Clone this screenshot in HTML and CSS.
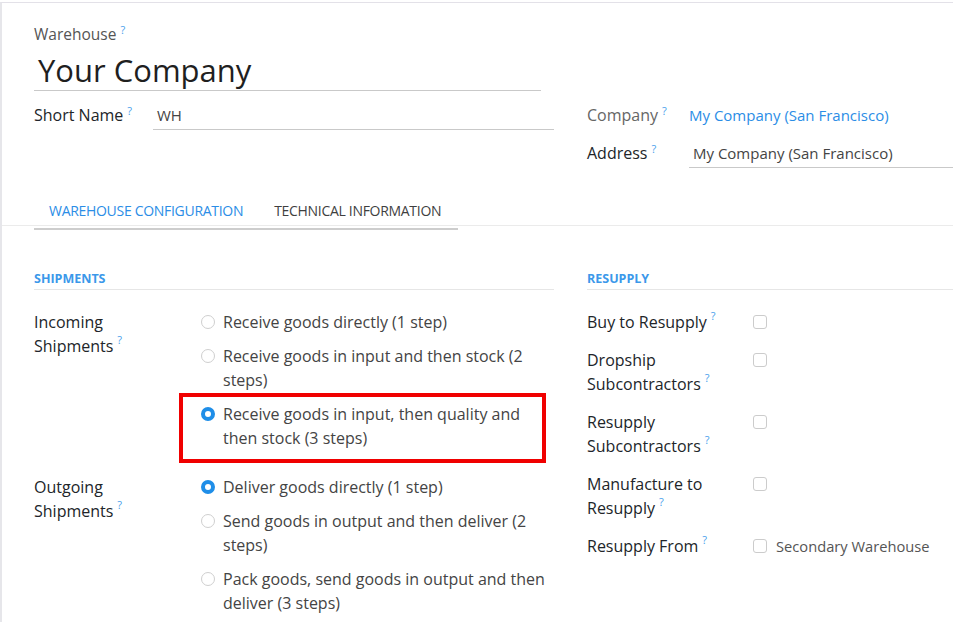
FILE: index.html
```html
<!DOCTYPE html>
<html lang="en">
<head>
<meta charset="utf-8">
<title>Warehouse</title>
<link rel="stylesheet" href="styles.css">
</head>
<body>
<div class="sheet">
  <div class="title">
    <div class="title-label">Warehouse<sup class="help">?</sup></div>
    <div class="title-input">Your Company</div>
  </div>

  <div class="cols top-cols">
    <div class="col">
      <div class="field">
        <div class="flabel flabel-left">Short Name<sup class="help">?</sup></div>
        <div class="finput finput-short">WH</div>
      </div>
    </div>
    <div class="col">
      <div class="field">
        <div class="flabel flabel-right readonly">Company<sup class="help">?</sup></div>
        <div class="fvalue link">My Company (San Francisco)</div>
      </div>
      <div class="field">
        <div class="flabel flabel-right">Address<sup class="help">?</sup></div>
        <div class="finput finput-address">My Company (San Francisco)</div>
      </div>
    </div>
  </div>

  <div class="tabs">
    <div class="tab-list">
      <span class="tab active">Warehouse Configuration</span>
      <span class="tab">Technical Information</span>
    </div>
  </div>
  <div class="tab-rule"></div>

  <div class="cols sections">
    <div class="col">
      <div class="section-head">Shipments</div>
      <div class="srow srow-radio">
        <div class="slabel">Incoming Shipments<sup class="help">?</sup></div>
        <div class="options">
          <div class="option"><span class="radio"></span><span class="otext">Receive goods directly (1 step)</span></div>
          <div class="option"><span class="radio"></span><span class="otext">Receive goods in input and then stock (2 steps)</span></div>
          <div class="option highlighted"><span class="radio checked"></span><span class="otext">Receive goods in input, then quality and then stock (3 steps)</span></div>
        </div>
      </div>
      <div class="srow srow-radio">
        <div class="slabel">Outgoing Shipments<sup class="help">?</sup></div>
        <div class="options">
          <div class="option"><span class="radio checked"></span><span class="otext">Deliver goods directly (1 step)</span></div>
          <div class="option"><span class="radio"></span><span class="otext">Send goods in output and then deliver (2 steps)</span></div>
          <div class="option"><span class="radio"></span><span class="otext">Pack goods, send goods in output and then deliver (3 steps)</span></div>
        </div>
      </div>
    </div>
    <div class="col">
      <div class="section-head">Resupply</div>
      <div class="srow">
        <div class="slabel">Buy to Resupply<sup class="help">?</sup></div>
        <div class="svalue"><span class="checkbox"></span></div>
      </div>
      <div class="srow">
        <div class="slabel">Dropship Subcontractors<sup class="help">?</sup></div>
        <div class="svalue"><span class="checkbox"></span></div>
      </div>
      <div class="srow">
        <div class="slabel">Resupply Subcontractors<sup class="help">?</sup></div>
        <div class="svalue"><span class="checkbox"></span></div>
      </div>
      <div class="srow">
        <div class="slabel">Manufacture to Resupply<sup class="help">?</sup></div>
        <div class="svalue"><span class="checkbox"></span></div>
      </div>
      <div class="srow">
        <div class="slabel">Resupply From<sup class="help">?</sup></div>
        <div class="svalue"><span class="checkbox"></span><span class="cblabel">Secondary Warehouse</span></div>
      </div>
    </div>
  </div>
</div>
</body>
</html>
```

FILE: styles.css
```css
html, body {
  margin: 0;
  padding: 0;
  background: #ffffff;
  overflow: hidden;
}

body {
  font-family: "Open Sans", "Noto Sans", "Liberation Sans", sans-serif;
  font-size: 16px;
  color: #212529;
  width: 953px;
  height: 623px;
}

.sheet {
  margin-top: 2px;
  border-top: 1px solid #e3e1e8;
  border-left: 2px solid #e6e6ea;
  padding: 21px 0 0 32px;
  height: 620px;
  box-sizing: border-box;
}

.help {
  color: #4a9fec;
  font-size: 11px;
  vertical-align: top;
  position: relative;
  top: 0;
  margin-left: 4px;
  line-height: 1;
}

/* Title */
.title-label {
  font-size: 15.5px;
  line-height: 20px;
  color: #555;
  height: 20px;
}

.title-input {
  margin-top: 6px;
  width: 507px;
  font-size: 31px;
  line-height: 40px;
  color: #1f1f1f;
  padding-left: 4px;
  box-sizing: border-box;
  border-bottom: 1px solid #c9c9c9;
}

/* Top columns */
.cols {
  display: flex;
  gap: 33px;
}

.col {
  width: 520px;
  flex: none;
}

.top-cols {
  margin-top: 12px;
}

.field {
  display: flex;
  align-items: flex-start;
  margin-bottom: 11px;
}

.flabel {
  flex: none;
  line-height: 20px;
  padding: 2px 0 5px;
  color: #212529;
}

.flabel.readonly {
  color: #666;
}

.flabel-left {
  width: 119px;
}

.flabel-right {
  width: 102px;
}

.finput {
  font-size: 15px;
  line-height: 20px;
  padding: 2px 4px 4px;
  border-bottom: 1px solid #c9c9c9;
  color: #444;
  box-sizing: border-box;
}

.finput-short {
  width: 402px;
}

.finput-address {
  width: 300px;
}

.fvalue {
  font-size: 15px;
  line-height: 20px;
  padding: 2px 0 5px;
}

.link {
  color: #2b8de6;
}

/* Tabs */
.tabs {
  margin-top: 12px;
  margin-left: -32px;
  padding-left: 32px;
  border-bottom: 1px solid #ebebeb;
}

.tab-list {
  display: flex;
  padding-top: 10px;
}

.tab {
  font-size: 14px;
  font-weight: 500;
  line-height: 20px;
  text-transform: uppercase;
  padding: 0 15px 4px;
  color: #3f3f3f;
  letter-spacing: -0.3px;
}

.tab + .tab {
  padding-left: 16px;
}

.tab.active {
  color: #2b8de6;
}

.tab-rule {
  width: 424px;
  height: 2px;
  margin-top: 2px;
  background: #cdcdcd;
}

/* Sections */
.sections {
  margin-top: 40px;
}

.section-head {
  font-size: 12.5px;
  font-weight: 700;
  line-height: 18px;
  text-transform: uppercase;
  color: #3b98ea;
  padding-bottom: 1px;
  border-bottom: 1px solid #e6e6e6;
  margin-bottom: 20px;
}

.srow {
  display: flex;
  align-items: flex-start;
  margin-bottom: 14px;
}

.srow-radio {
  margin-bottom: 25px;
}

.slabel {
  flex: none;
  width: 166px;
  padding-right: 19px;
  box-sizing: border-box;
  line-height: 24px;
  color: #212529;
}

.options {
  display: flex;
  flex-direction: column;
  gap: 10px;
  margin-left: 1px;
}

.option {
  display: flex;
  align-items: flex-start;
  position: relative;
}

.otext {
  width: 329px;
  line-height: 24px;
  color: #444;
  margin-left: 8px;
}

.radio {
  flex: none;
  width: 14px;
  height: 14px;
  margin-top: 5px;
  border-radius: 50%;
  border: 1px solid #cfcfcf;
  box-sizing: border-box;
  background: #fff;
}

.radio.checked {
  border: 4px solid #1f8ee8;
}

.option.highlighted::after {
  content: "";
  position: absolute;
  left: -22px;
  top: -9px;
  right: 6px;
  bottom: -13px;
  border: 4px solid #f00000;
  pointer-events: none;
}

.svalue {
  display: flex;
  align-items: center;
  height: 24px;
}

.checkbox {
  flex: none;
  width: 14px;
  height: 14px;
  border: 1px solid #cccccc;
  border-radius: 3px;
  box-sizing: border-box;
  background: #fff;
}

.cblabel {
  margin-left: 9px;
  font-size: 14.7px;
  color: #555;
}
```
